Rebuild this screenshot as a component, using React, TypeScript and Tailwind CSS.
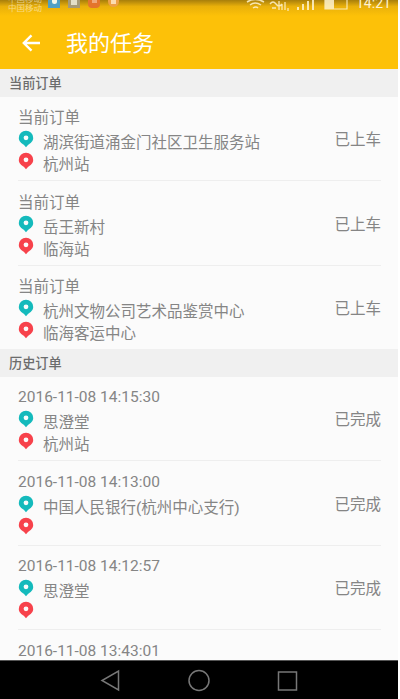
import { Fragment } from "react";
import clsx from "clsx";

interface Order {
  title: string;
  from: string;
  to: string;
  status?: string;
}

interface Section {
  name: string;
  dated?: boolean;
  orders: Order[];
}

const sections: Section[] = [
  {
    name: "当前订单",
    orders: [
      { title: "当前订单", from: "湖滨街道涌金门社区卫生服务站", to: "杭州站", status: "已上车" },
      { title: "当前订单", from: "岳王新村", to: "临海站", status: "已上车" },
      { title: "当前订单", from: "杭州文物公司艺术品鉴赏中心", to: "临海客运中心", status: "已上车" },
    ],
  },
  {
    name: "历史订单",
    dated: true,
    orders: [
      { title: "2016-11-08 14:15:30", from: "思澄堂", to: "杭州站", status: "已完成" },
      { title: "2016-11-08 14:13:00", from: "中国人民银行(杭州中心支行)", to: "", status: "已完成" },
      { title: "2016-11-08 14:12:57", from: "思澄堂", to: "", status: "已完成" },
      { title: "2016-11-08 13:43:01", from: "", to: "" },
    ],
  },
];

function Pin({ className }: { className: string }) {
  return (
    <svg viewBox="0 0 16 18" className={clsx("w-4 h-[18px] shrink-0 -mt-[2px]", className)}>
      <path
        fill="currentColor"
        fillRule="evenodd"
        d="M8 .7a7.200 7.200 0 0 1 7.200 7.200c0 3.400-2.700 5.300-5 6.800L8 17.300l-2.200-2.600C3.500 13.200.8 11.300.8 7.900A7.200 7.200 0 0 1 8 .7Zm0 4.700a2.400 2.400 0 1 0 0 4.800 2.400 2.400 0 0 0 0-4.800Z"
      />
    </svg>
  );
}

function StatusBar() {
  return (
    <div className="h-4 overflow-hidden bg-linear-to-b from-[#a87f0b] via-[#e9b00a] via-40% to-[#fdc108] flex justify-between text-[#fff3cf]">
      <div className="flex pl-2">
        <div className="w-[35px] text-[8.500px] leading-[9px] -mt-[5px] opacity-60 whitespace-nowrap">
          <div>中国移动</div>
          <div>中国移动</div>
        </div>
        <div className="flex gap-[8px] ml-[5px]">
          <span className="w-3 h-[8px] bg-[#4f9fc4] flex justify-center">
            <span className="w-[5px] h-[4px] bg-[#f1f6e8] rounded-b-sm" />
          </span>
          <span className="w-3 h-[8px] bg-[#a59a78] flex justify-center">
            <span className="w-[6px] h-[5px] bg-[#e3dfc9]" />
          </span>
          <span className="w-3 h-[8px] rounded-b-sm bg-[#e4742c] flex justify-center">
            <span className="w-[5px] h-[3px] bg-[#f0a878]" />
          </span>
          <span className="w-[11px] h-[7px] rounded-b-full bg-[#eda045] flex justify-center">
            <span className="w-[5px] h-[4px] bg-[#fbdcae]" />
          </span>
        </div>
      </div>
      <div className="flex pr-[10px]">
        <svg viewBox="0 0 110 12" className="w-[110px] h-3 opacity-85" fill="none" stroke="currentColor">
          <path d="M1 2q8-5 17 0M4 5q5-4 11 0M7 8q3-2 5 0" strokeWidth="1.500" />
          <path d="M24 4q3-4 6 0t6 0M26 8h4M33 1v9M36 4v6M39 2v8M42 8v3" strokeWidth="1.300" />
          <path d="M52 7v3M57 4v6M62 1v9M67 0v10" strokeWidth="2" />
          <path d="M79 0v9h22V0" strokeWidth="1.200" />
          <path d="M79 0h9v9h-9z" fill="currentColor" stroke="none" />
        </svg>
        <span className="text-[14px] leading-4 -mt-[5px] w-[32px]">14:21</span>
      </div>
    </div>
  );
}

function OrderRow({ order, dated, last }: { order: Order; dated?: boolean; last: boolean }) {
  return (
    <div className={clsx("shrink-0 pl-[18px] pr-[17px]", last ? "h-[83px]" : "h-[84.500px]")}>
      <div
        className={clsx(
          "pt-[10px] flex items-start justify-between",
          last ? "h-[83px]" : "h-[84px] border-b border-[#eeeeee]"
        )}
      >
        <div className="leading-[22px]">
          <div className={clsx("h-[25px]", dated && "leading-5")}>{order.title}</div>
          <div className="h-[22px] flex">
            <Pin className="text-[#14babc]" />
            <span className="ml-[9px]">{order.from}</span>
          </div>
          <div className="h-[22px] flex">
            <Pin className="text-[#f7424b]" />
            <span className="ml-[9px]">{order.to}</span>
          </div>
        </div>
        {order.status && <div className="mt-[22px] leading-[22px]">{order.status}</div>}
      </div>
    </div>
  );
}

export default function App() {
  return (
    <div className="w-[400px] h-[699px] bg-white overflow-hidden font-[Roboto,'Noto_Sans_CJK_SC',sans-serif]">
      <div className="w-[398px] h-full flex flex-col bg-[#fbfbfb] text-[15.500px] text-[#858585]">
        <header className="h-[69px] shrink-0 bg-[#fdc108] text-white">
          <StatusBar />
          <div className="h-[53px] flex items-center">
            <svg viewBox="0 0 20 18" className="w-5 h-[18px] ml-[21px]" fill="none" stroke="currentColor" strokeWidth="2.400">
              <path d="M19 9H3M10.500 1.300L2.800 9l7.700 7.700" />
            </svg>
            <h1 className="ml-[25px] mt-[2px] text-[22px] leading-8">我的任务</h1>
          </div>
        </header>

        <main className="flex-1 min-h-0 overflow-hidden flex flex-col">
          {sections.map((section) => (
            <Fragment key={section.name}>
              <h2 className="h-7 shrink-0 pl-[9px] pt-px bg-[#f0f0f0] text-[13.200px] leading-7 font-medium text-[#6c6c6c]">
                {section.name}
              </h2>
              {section.orders.map((order, i) => (
                <OrderRow
                  key={i}
                  order={order}
                  dated={section.dated}
                  last={i === section.orders.length - 1}
                />
              ))}
            </Fragment>
          ))}
        </main>

        <nav className="h-[39px] shrink-0 bg-black border-t border-[#555555] text-[#777777]">
          <svg viewBox="0 0 398 38" className="w-[398px] h-[38px]" fill="none" stroke="currentColor" strokeWidth="1.500">
            <path d="M118.500 10v19L102 19.500Z" />
            <circle cx="199" cy="19.500" r="10" />
            <rect x="278.500" y="11" width="18" height="18" />
          </svg>
        </nav>
      </div>
    </div>
  );
}
